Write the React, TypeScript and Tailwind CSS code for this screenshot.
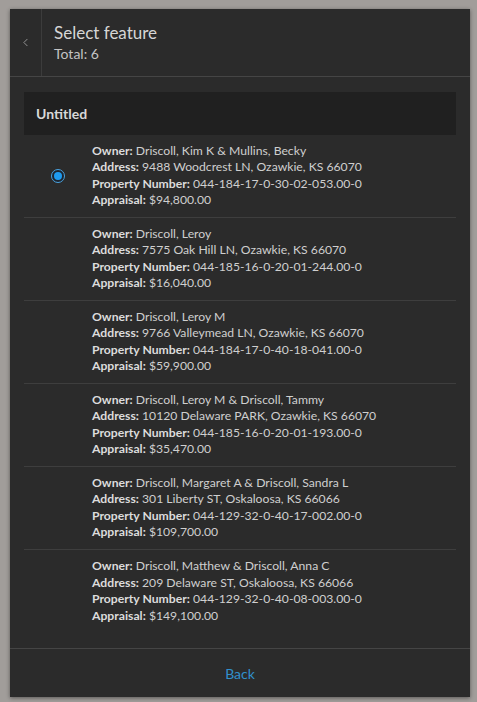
import { ChevronLeft } from 'lucide-react'

interface Feature {
  owner: string
  address: string
  property: string
  appraisal: string
}

const features: Feature[] = [
  {
    owner: 'Driscoll, Kim K & Mullins, Becky',
    address: '9488 Woodcrest LN, Ozawkie, KS 66070',
    property: '044-184-17-0-30-02-053.00-0',
    appraisal: '$94,800.00',
  },
  {
    owner: 'Driscoll, Leroy',
    address: '7575 Oak Hill LN, Ozawkie, KS 66070',
    property: '044-185-16-0-20-01-244.00-0',
    appraisal: '$16,040.00',
  },
  {
    owner: 'Driscoll, Leroy M',
    address: '9766 Valleymead LN, Ozawkie, KS 66070',
    property: '044-184-17-0-40-18-041.00-0',
    appraisal: '$59,900.00',
  },
  {
    owner: 'Driscoll, Leroy M & Driscoll, Tammy',
    address: '10120 Delaware PARK, Ozawkie, KS 66070',
    property: '044-185-16-0-20-01-193.00-0',
    appraisal: '$35,470.00',
  },
  {
    owner: 'Driscoll, Margaret A & Driscoll, Sandra L',
    address: '301 Liberty ST, Oskaloosa, KS 66066',
    property: '044-129-32-0-40-17-002.00-0',
    appraisal: '$109,700.00',
  },
  {
    owner: 'Driscoll, Matthew & Driscoll, Anna C',
    address: '209 Delaware ST, Oskaloosa, KS 66066',
    property: '044-129-32-0-40-08-003.00-0',
    appraisal: '$149,100.00',
  },
]

const Field = ({ label, value }: { label: string; value: string }) => (
  <div className="text-[12.2px] leading-[16.5px] whitespace-nowrap">
    <span className="font-bold text-[#dcdcdc]">{label}:</span>{' '}
    <span className="text-[#cfcfcf]">{value}</span>
  </div>
)

export default function App() {
  return (
    <div
      className="w-[477px] h-[702px] bg-[#a19d9a] pt-[9px] pl-[10px]"
      style={{ fontFamily: 'Lato, "Noto Sans", sans-serif' }}
    >
      <div className="w-[460px] h-[688px] bg-[#2b2b2b] flex flex-col shadow-[0_1px_4px_rgba(0,0,0,0.45)]">
        {/* Header */}
        <div className="flex h-[68px] border-b border-[#454545] shrink-0">
          <button className="w-[32px] border-r border-[#3c3c3c] flex items-center justify-center text-[#a8a8a8]">
            <ChevronLeft size={13} strokeWidth={1.5} />
          </button>
          <div className="pl-[12px] pt-[13px]">
            <div className="text-[17px] leading-[22px] text-[#d6d6d6]">Select feature</div>
            <div className="text-[14px] leading-[20px] text-[#c4c4c4]">Total: 6</div>
          </div>
        </div>

        {/* List */}
        <div className="flex-1 px-[14px] pt-[15px]">
          <div className="h-[43px] bg-[#202020] flex items-center pl-[12px] text-[14px] font-bold text-[#d8d8d8]">
            Untitled
          </div>
          {features.map((f, i) => (
            <div
              key={i}
              className={`flex items-center h-[83px] ${
                i < features.length - 1 ? 'border-b border-[#3e3e3e]' : ''
              }`}
            >
              <div className="w-[68px] flex justify-center">
                {i === 0 && (
                  <div className="w-[14px] h-[14px] rounded-full border border-[#4aa3e0] bg-[#1c2530] p-[2px]">
                    <div className="w-full h-full rounded-full bg-[#1e9bf0]" />
                  </div>
                )}
              </div>
              <div className="pb-[1px]">
                <Field label="Owner" value={f.owner} />
                <Field label="Address" value={f.address} />
                <Field label="Property Number" value={f.property} />
                <Field label="Appraisal" value={f.appraisal} />
              </div>
            </div>
          ))}
        </div>

        {/* Footer */}
        <div className="h-[49px] border-t border-[#454545] flex items-center justify-center shrink-0">
          <button className="text-[14px] text-[#3190cb]">Back</button>
        </div>
      </div>
    </div>
  )
}
